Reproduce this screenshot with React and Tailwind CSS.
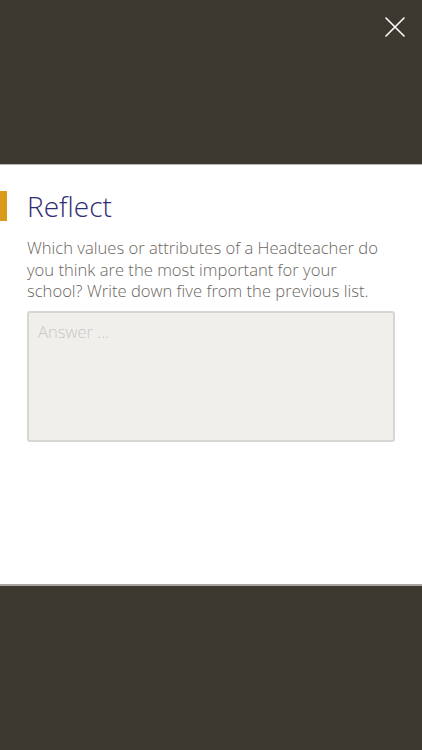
export default function App() {
  return (
    <div className="w-[422px] h-[750px] flex flex-col bg-[#3d3931] font-['Open_Sans',sans-serif]">
      {/* top dark area with close button */}
      <div className="h-[165px] shrink-0 flex justify-end items-start border-b border-[#b9b7b3]">
        <button className="mt-[17px] mr-[17px] w-[20px] h-[20px]">
          <svg viewBox="0 0 20 20" width="20" height="20" stroke="#ffffff" strokeWidth="1.6" strokeLinecap="round">
            <line x1="1" y1="1" x2="19" y2="19" />
            <line x1="19" y1="1" x2="1" y2="19" />
          </svg>
        </button>
      </div>

      {/* white panel */}
      <div className="h-[421px] shrink-0 bg-white pt-[24px] border-b-2 border-[#aaa6a1]">
        <div className="flex items-center">
          <div className="w-[7px] h-[30px] bg-[#dc9a1b]" />
          <h1 className="ml-[20px] text-[28px] leading-[34px] font-light text-[#2f2c73]">Reflect</h1>
        </div>
        <p className="mx-[27px] mt-[14px] text-[16.6px] leading-[21.5px] font-light text-[#6b6661]">
          Which values or attributes of a Headteacher do you think are the most important for your school? Write down five from the previous list.
        </p>
        <div className="mx-[27px] mt-[9px]">
          <textarea
            placeholder="Answer ..."
            className="block w-full h-[131px] resize-none bg-[#f0efec] border-2 border-[#d8d6d2] rounded-[3px] px-[9px] py-[7px] text-[16.6px] font-light text-[#6b6661] placeholder:text-[#c9c7c3] outline-none"
          />
        </div>
      </div>

      <div className="flex-1" />
    </div>
  );
}
